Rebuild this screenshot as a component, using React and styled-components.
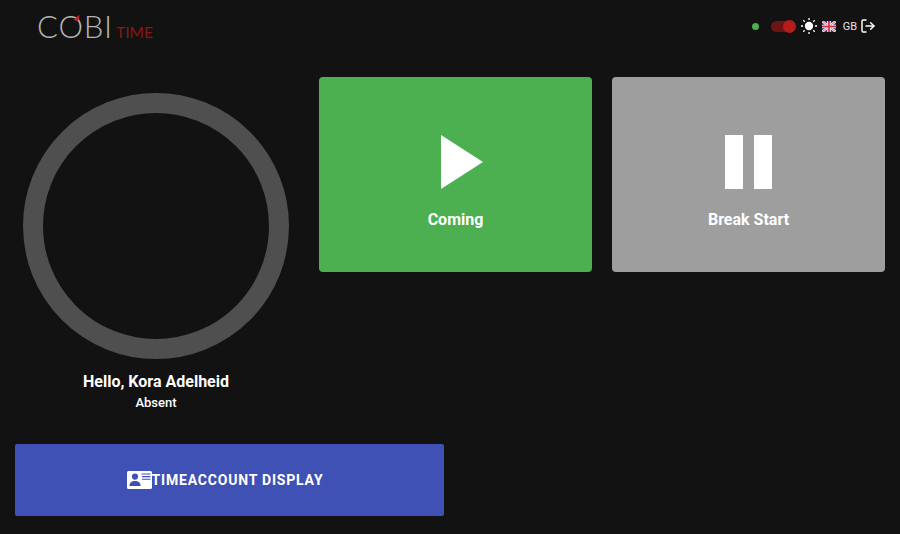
import React from 'react'
import styled, { createGlobalStyle } from 'styled-components'
import { LogOut } from 'lucide-react'

const Global = createGlobalStyle`
  html, body { margin: 0; padding: 0; background: #121212; }
  body { font-family: Roboto, "Liberation Sans", sans-serif; color: #fff; }
`

const Page = styled.div`
  width: 900px;
  height: 534px;
  overflow: hidden;
  display: flex;
  flex-direction: column;
  background: #121212;
`

const Header = styled.header`
  height: 52px;
  display: flex;
  align-items: center;
  justify-content: space-between;
  padding: 0 24px 0 37px;
`

const Logo = styled.div`
  display: flex;
  align-items: baseline;
  font-family: Lato, Roboto, sans-serif;
  position: relative;
`

const LogoMain = styled.span`
  font-size: 31px;
  font-weight: 300;
  letter-spacing: 0.8px;
  color: #b4b4b4;
  line-height: 1;
`

const LogoTime = styled.span`
  font-size: 15.5px;
  font-weight: 400;
  color: #8f1414;
  margin-left: 3px;
`

const LogoMark = styled.i`
  position: absolute;
  left: 38px;
  top: 3px;
  width: 0;
  height: 0;
  border-left: 3px solid transparent;
  border-right: 2px solid transparent;
  border-bottom: 7px solid #d02020;
  transform: rotate(28deg);
`

const Tools = styled.div`
  display: flex;
  align-items: center;
`

const Dot = styled.span`
  width: 7px;
  height: 7px;
  border-radius: 50%;
  background: #4caf50;
  margin-right: 12px;
`

const Switch = styled.div`
  position: relative;
  width: 24px;
  height: 11px;
  border-radius: 6px;
  background: #6d1515;
  margin-right: 6px;
`

const Thumb = styled.span`
  position: absolute;
  right: -1px;
  top: -1px;
  width: 13px;
  height: 13px;
  border-radius: 50%;
  background: #b71c1c;
`

const FlagSlot = styled.span`
  display: flex;
  margin-left: 5px;
`

const CountryCode = styled.span`
  font-size: 11px;
  color: #e4e4e4;
  margin: 0 3px 0 7px;
`

const Main = styled.main`
  flex: 1;
  display: grid;
  grid-template-columns: 282px 273px 273px;
  grid-template-rows: 367px;
  align-items: start;
  padding: 25px 15px 0 23px;
  box-sizing: border-box;
`

const Status = styled.section`
  display: flex;
  flex-direction: column;
  align-items: flex-start;
  padding-top: 16px;
`

const Ring = styled.div`
  width: 266px;
  height: 266px;
  box-sizing: border-box;
  border: 20px solid #4f4f4f;
  border-radius: 50%;
`

const Name = styled.div`
  width: 266px;
  text-align: center;
  margin-top: 13px;
  font-size: 16px;
  font-weight: 700;
  line-height: 19px;
`

const State = styled.div`
  width: 266px;
  text-align: center;
  margin-top: 5px;
  font-size: 13px;
  font-weight: 500;
  line-height: 14px;
`

const Card = styled.button`
  width: 273px;
  height: 194.5px;
  border: 0;
  border-radius: 4px;
  background: ${(p) => p.$bg};
  margin-left: ${(p) => p.$gap}px;
  color: #fff;
  font-family: inherit;
  font-size: 16px;
  font-weight: 700;
  display: flex;
  flex-direction: column;
  align-items: center;
  padding: 58px 0 0;
`

const CardIcon = styled.span`
  display: flex;
  margin-left: ${(p) => p.$shift || 0}px;
`

const CardLabel = styled.span`
  margin-top: 21px;
  line-height: 19px;
`

const Footer = styled.div`
  padding: 0 0 18px 15px;
`

const WideButton = styled.button`
  width: 429px;
  height: 72px;
  border: 0;
  border-radius: 2px;
  background: #3f51b5;
  color: #fff;
  font-family: inherit;
  font-size: 14px;
  font-weight: 700;
  letter-spacing: 0.8px;
  display: flex;
  align-items: center;
  justify-content: center;
  padding: 0 9px 0 0;
`

const Sun = () => (
  <svg width="16" height="16" viewBox="0 0 16 16" fill="#fff">
    <circle cx="8" cy="8" r="4.2" />
    <path
      d="M8 0v2M8 14v2M0 8h2M14 8h2M2.3 2.3l1.4 1.4M12.3 12.3l1.4 1.4M2.3 13.7l1.4-1.4M12.3 3.7l1.4-1.4"
      stroke="#fff"
      strokeWidth="1.3"
    />
  </svg>
)

const Flag = () => (
  <svg width="14" height="11" viewBox="0 0 14 11">
    <rect width="14" height="11" fill="#2b3a86" />
    <path d="M0 0L14 11M14 0L0 11" stroke="#fff" strokeWidth="2.4" />
    <path d="M0 0L14 11M14 0L0 11" stroke="#d8324a" strokeWidth="0.8" />
    <path d="M7 0v11M0 5.5h14" stroke="#fff" strokeWidth="3.4" />
    <path d="M7 0v11M0 5.5h14" stroke="#d8324a" strokeWidth="1.8" />
  </svg>
)

const Play = () => (
  <svg width="42" height="54" viewBox="0 0 42 54" fill="#fff">
    <path d="M0 0L42 27L0 54Z" />
  </svg>
)

const Pause = () => (
  <svg width="47" height="54" viewBox="0 0 47 54" fill="#fff">
    <rect x="0" width="18" height="54" />
    <rect x="29" width="18" height="54" />
  </svg>
)

const IdCard = () => (
  <svg width="25" height="18" viewBox="0 0 25 18">
    <rect width="25" height="18" rx="1.6" fill="#fff" />
    <circle cx="8" cy="5.6" r="3.1" fill="#3f51b5" />
    <path d="M2.4 15c0-3.2 2.2-5 5.6-5s5.6 1.8 5.6 5z" fill="#3f51b5" />
    <path d="M14.5 3h9M15 5.6h8.5M15 8.2h8.5" stroke="#3f51b5" strokeWidth="1.1" />
  </svg>
)

export default function App() {
  return (
    <Page>
      <Global />
      <Header>
        <Logo>
          <LogoMain>COBI</LogoMain>
          <LogoMark />
          <LogoTime>TIME</LogoTime>
        </Logo>
        <Tools>
          <Dot />
          <Switch><Thumb /></Switch>
          <Sun />
          <FlagSlot><Flag /></FlagSlot>
          <CountryCode>GB</CountryCode>
          <LogOut size={16} color="#fff" strokeWidth={2.2} />
        </Tools>
      </Header>
      <Main>
        <Status>
          <Ring />
          <Name>Hello, Kora Adelheid</Name>
          <State>Absent</State>
        </Status>
        <Card $bg="#4caf50" $gap={14}>
          <CardIcon $shift={13}><Play /></CardIcon>
          <CardLabel>Coming</CardLabel>
        </Card>
        <Card $bg="#9e9e9e" $gap={34}>
          <CardIcon><Pause /></CardIcon>
          <CardLabel>Break Start</CardLabel>
        </Card>
      </Main>
      <Footer>
        <WideButton>
          <IdCard />
          TIMEACCOUNT DISPLAY
        </WideButton>
      </Footer>
    </Page>
  )
}
